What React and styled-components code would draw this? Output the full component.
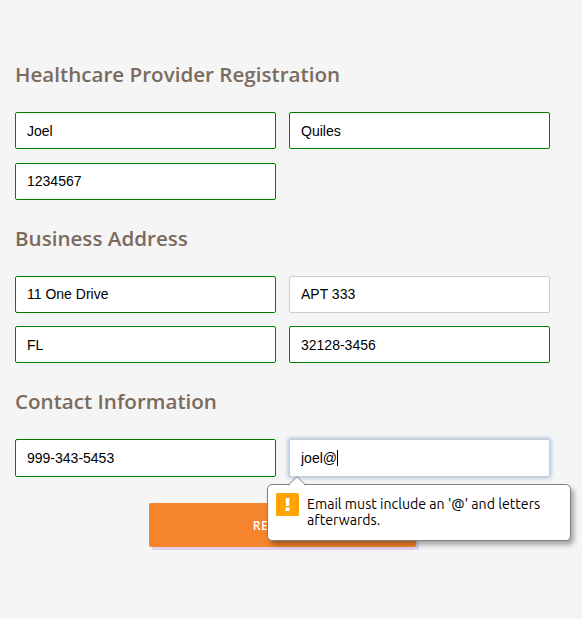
import React from "react";
import styled, { createGlobalStyle } from "styled-components";

const GlobalStyle = createGlobalStyle`
  *, *::before, *::after { box-sizing: border-box; }
  body { margin: 0; background: #f5f5f5; overflow: hidden; }
`;

const Form = styled.form`
  width: 582px;
  height: 619px;
  padding: 60px 32px 0 15px;
  background: #f5f5f5;
`;

const Section = styled.section`
  height: ${(p) => p.$height}px;
`;

const Heading = styled.h2`
  margin: 0 0 22px;
  height: 30px;
  font: 600 20.6px/28px "Open Sans", sans-serif;
  color: #7b6a5e;
  white-space: nowrap;
`;

const FieldGrid = styled.div`
  display: grid;
  grid-template-columns: 261px 261px;
  column-gap: 13px;
  row-gap: ${(p) => p.$rowGap || 13}px;
`;

const FieldSlot = styled.div`
  position: relative;
`;

const Input = styled.input`
  display: block;
  width: 261px;
  height: ${(p) => p.$height || 37}px;
  margin: 0;
  padding: ${(p) => (p.$low ? "1px 11px 0" : "0 11px 1px")};
  border: 1px solid ${(p) => (p.$valid ? "#008000" : "#cccccc")};
  border-radius: 2px;
  background: #fff;
  box-shadow: ${(p) => (p.$active ? "0 0 4px 1px #a3c0e0" : "none")};
  color: #000;
  font: 14px "Liberation Sans", Arial, sans-serif;
  outline: none;
`;

const Caret = styled.span`
  position: absolute;
  left: 48px;
  top: 11px;
  width: 1px;
  height: 16px;
  background: #000;
`;

const Actions = styled.div`
  position: relative;
  padding-left: 134px;
`;

const SubmitButton = styled.button`
  display: block;
  width: 267px;
  height: 44px;
  padding: 1px 0 0;
  border: 0;
  border-radius: 2px;
  background: #f6842c;
  box-shadow: 3px 3px 0 #e1d0ec;
  color: #fff;
  font: 600 12px/43px "Open Sans", sans-serif;
  letter-spacing: 0.6px;
`;

const Tooltip = styled.div`
  position: absolute;
  left: 252px;
  top: -19px;
  width: 304px;
  height: 57px;
  display: flex;
  gap: 8px;
  padding: 8px;
  border: 1px solid #808080;
  border-radius: 5px;
  background: #fff;
  box-shadow: 3px 4px 5px rgba(0, 0, 0, 0.32);
`;

const Pointer = styled.svg`
  position: absolute;
  left: 20px;
  top: -9px;
`;

const WarningIcon = styled.svg`
  flex: none;
`;

const Message = styled.div`
  padding-top: 3px;
  color: #000;
  font: 14.16px/16px Ubuntu, "Noto Sans", sans-serif;
  white-space: nowrap;
`;

export default function App() {
  return (
    <>
      <GlobalStyle />
      <Form noValidate>
        <Section $height={164}>
          <Heading>Healthcare Provider Registration</Heading>
          <FieldGrid $rowGap={14}>
            <Input $valid $low defaultValue="Joel" />
            <Input $valid $low defaultValue="Quiles" />
            <Input $valid defaultValue="1234567" />
          </FieldGrid>
        </Section>
        <Section $height={163}>
          <Heading>Business Address</Heading>
          <FieldGrid>
            <Input $valid defaultValue="11 One Drive" />
            <Input defaultValue="APT 333" />
            <Input $valid $low defaultValue="FL" />
            <Input $valid $low defaultValue="32128-3456" />
          </FieldGrid>
        </Section>
        <Section $height={116}>
          <Heading>Contact Information</Heading>
          <FieldGrid>
            <Input $valid $height={38} defaultValue="999-343-5453" />
            <FieldSlot>
              <Input $active $height={38} defaultValue="joel@" />
              <Caret />
            </FieldSlot>
          </FieldGrid>
        </Section>
        <Actions>
          <SubmitButton type="button">REGISTER</SubmitButton>
          <Tooltip role="alert">
            <Pointer width="18" height="10" viewBox="0 0 18 10">
              <path d="M1 9 L9 1 L17 9 V10 H1 Z" fill="#fff" />
              <path d="M0.5 8.9 L9 0.7 L17.5 8.9" fill="none" stroke="#808080" />
            </Pointer>
            <WarningIcon width="23" height="23" viewBox="0 0 23 23">
              <rect width="23" height="23" rx="1.5" fill="#ffa400" />
              <path d="M9.5 5h4l-.5 8h-3zM9.5 14.5h4v3.5h-4z" fill="#fff" />
            </WarningIcon>
            <Message>
              Email must include an '@' and letters
              <br />
              afterwards.
            </Message>
          </Tooltip>
        </Actions>
      </Form>
    </>
  );
}
